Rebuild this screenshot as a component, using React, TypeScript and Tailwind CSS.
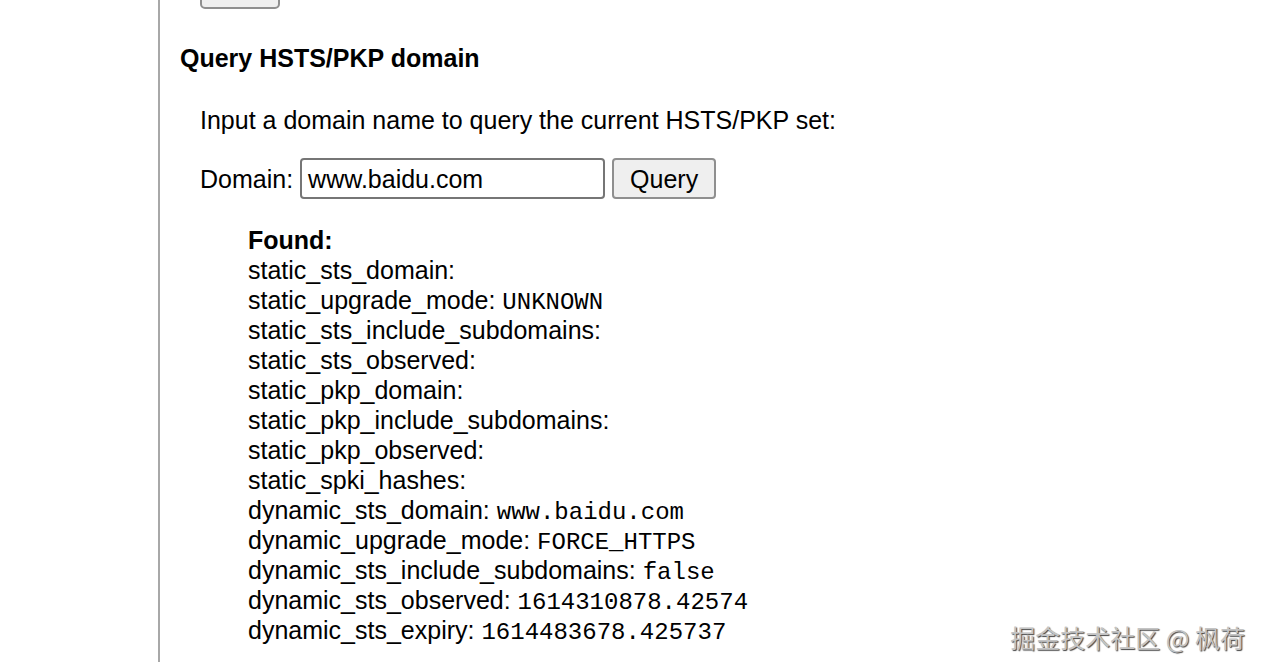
import React from "react";

const rows: [string, string?][] = [
  ["static_sts_domain:"],
  ["static_upgrade_mode:", "UNKNOWN"],
  ["static_sts_include_subdomains:"],
  ["static_sts_observed:"],
  ["static_pkp_domain:"],
  ["static_pkp_include_subdomains:"],
  ["static_pkp_observed:"],
  ["static_spki_hashes:"],
  ["dynamic_sts_domain:", "www.baidu.com"],
  ["dynamic_upgrade_mode:", "FORCE_HTTPS"],
  ["dynamic_sts_include_subdomains:", "false"],
  ["dynamic_sts_observed:", "1614310878.42574"],
  ["dynamic_sts_expiry:", "1614483678.425737"],
];

export default function App() {
  return (
    <div
      className="relative w-[1266px] h-[672px] overflow-hidden bg-white text-black"
      style={{ fontFamily: '"Liberation Sans", Arial, sans-serif' }}
    >
      <div className="ml-[158px] h-full border-l-2 border-[#a8a8a8] pl-[20px]">
        <div className="ml-[20px] -mt-[10px] h-[19px] w-[80px] rounded-[5px] border-2 border-[#8f8f8f] bg-[#efefef]" />
        <h2 className="mt-[34px] text-[25px] leading-[30px] font-bold">Query HSTS/PKP domain</h2>
        <div className="pl-[20px]">
          <p className="mt-[32px] text-[25px] leading-[30px]">
            Input a domain name to query the current HSTS/PKP set:
          </p>
          <div className="mt-[23px] flex items-center text-[25px] leading-[30px]">
            <span>Domain:</span>
            <div className="ml-[7px] flex h-[41px] w-[305px] items-center rounded-[4px] border-2 border-[#767676] px-[6px]">
              www.baidu.com
            </div>
            <div className="ml-[7px] flex h-[41px] w-[104px] items-center justify-center rounded-[4px] border-2 border-[#8f8f8f] bg-[#efefef]">
              Query
            </div>
          </div>
          <div className="mt-[26px] pl-[48px] text-[25px] leading-[30px]">
            <div className="h-[30px] font-bold">Found:</div>
            {rows.map(([k, v]) => (
              <div key={k} className="h-[30px] whitespace-nowrap">
                {k}
                {v && (
                  <>
                    {" "}
                    <span
                      className="text-[24px] leading-[30px]"
                      style={{ fontFamily: '"Liberation Mono", "Courier New", monospace' }}
                    >
                      {v}
                    </span>
                  </>
                )}
              </div>
            ))}
          </div>
        </div>
      </div>
      <div
        className="absolute right-[21px] top-[620px] text-[25px] leading-[34px] text-[#c4c4c4]"
        style={{ fontFamily: '"Noto Sans CJK SC", sans-serif', textShadow: "1px 1px 1px #444" }}
      >
        掘金技术社区 @ 枫荷
      </div>
    </div>
  );
}
